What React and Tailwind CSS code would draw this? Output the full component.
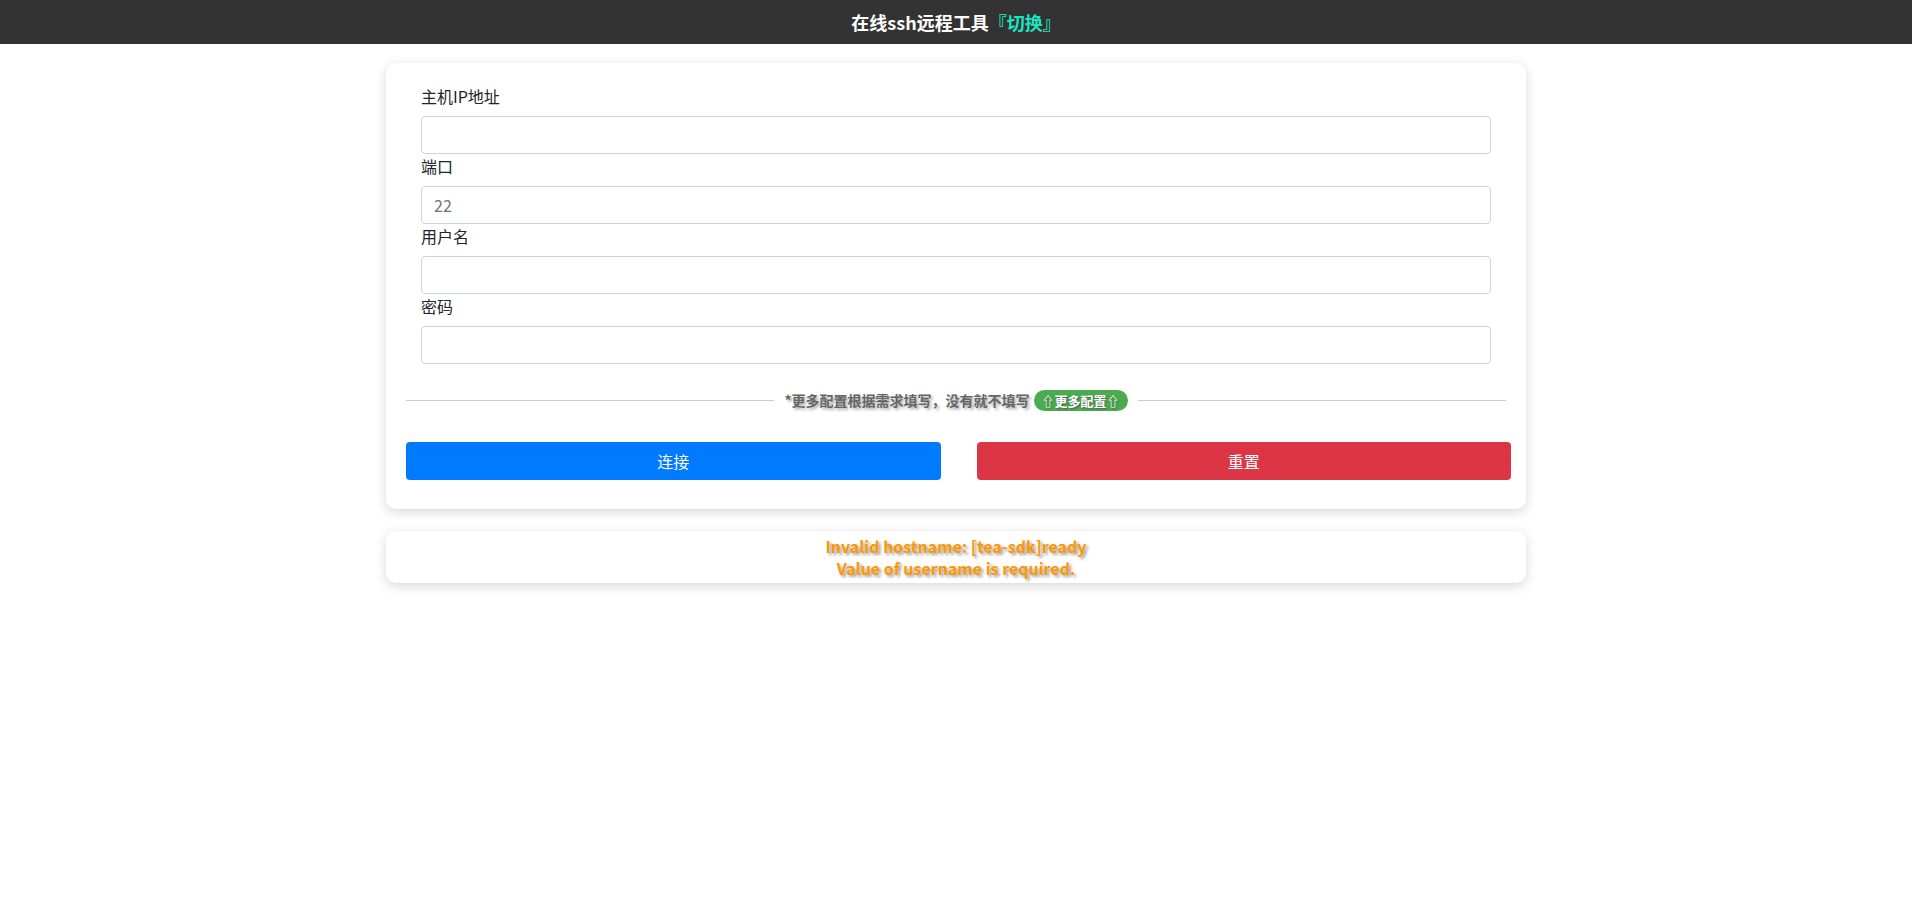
import React from 'react';

const fields = [
    { label: '主机IP地址', value: '' },
    { label: '端口', value: '22' },
    { label: '用户名', value: '' },
    { label: '密码', value: '', type: 'password' },
];

export default function App() {
    return (
        <div className="min-h-screen bg-white font-['Noto_Sans_CJK_SC',sans-serif] text-[#212529]">
            {/* Header */}
            <header className="h-[44px] bg-[#333333] flex items-center justify-center">
                <h1 className="text-[18px] font-bold text-white">
                    在线ssh远程工具<span className="text-[#1ce6c0]">『切换』</span>
                </h1>
            </header>

            <div className="w-[1140px] mx-auto mt-[19px]">
                {/* Form card */}
                <div className="bg-white rounded-[10px] shadow-[0_3px_12px_rgba(0,0,0,0.16)] pt-[21px] pb-[29px]">
                    <div className="px-[35px]">
                        {fields.map((f) => (
                            <div key={f.label} className="flex flex-col">
                                <label className="text-[16px] leading-[24px] mb-[8px]">{f.label}</label>
                                <input
                                    type={f.type || 'text'}
                                    defaultValue={f.value}
                                    className="h-[38px] w-full border border-[#ced4da] rounded-[4px] px-[12px] text-[16px] text-[#6c757d] outline-none"
                                />
                            </div>
                        ))}
                    </div>

                    <div className="pl-[20px] pr-[15px]">
                        {/* Divider */}
                        <div className="mt-[26px] mr-[5px] h-[21px] flex items-center">
                            <div className="flex-1 h-px bg-[#cccccc]" />
                            <span className="mx-[10px] text-[14px] font-bold text-[#666666] [text-shadow:2px_2px_3px_#aaa]">
                                *更多配置根据需求填写，没有就不填写
                            </span>
                            <button className="-ml-[6px] mr-[10px] h-[21px] px-[8px] rounded-full bg-[#4caa4f] text-white text-[13px] font-bold leading-[21px] [text-shadow:1px_1px_2px_#555]">
                                ⇧更多配置⇧
                            </button>
                            <div className="flex-1 h-px bg-[#cccccc]" />
                        </div>

                        {/* Buttons */}
                        <div className="mt-[31px] grid grid-cols-2 gap-[36px]">
                            <button className="h-[38px] rounded-[4px] bg-[#007bff] text-white text-[16px]">连接</button>
                            <button className="h-[38px] rounded-[4px] bg-[#dc3545] text-white text-[16px]">重置</button>
                        </div>
                    </div>
                </div>

                {/* Message card */}
                <div className="mt-[22px] bg-white rounded-[10px] shadow-[0_3px_12px_rgba(0,0,0,0.16)] py-[4px] text-center text-[16px] leading-[22px] font-bold text-[#ff9800] [text-shadow:2px_2px_3px_#999]">
                    <div>Invalid hostname: [tea-sdk]ready</div>
                    <div>Value of username is required.</div>
                </div>
            </div>
        </div>
    );
}
